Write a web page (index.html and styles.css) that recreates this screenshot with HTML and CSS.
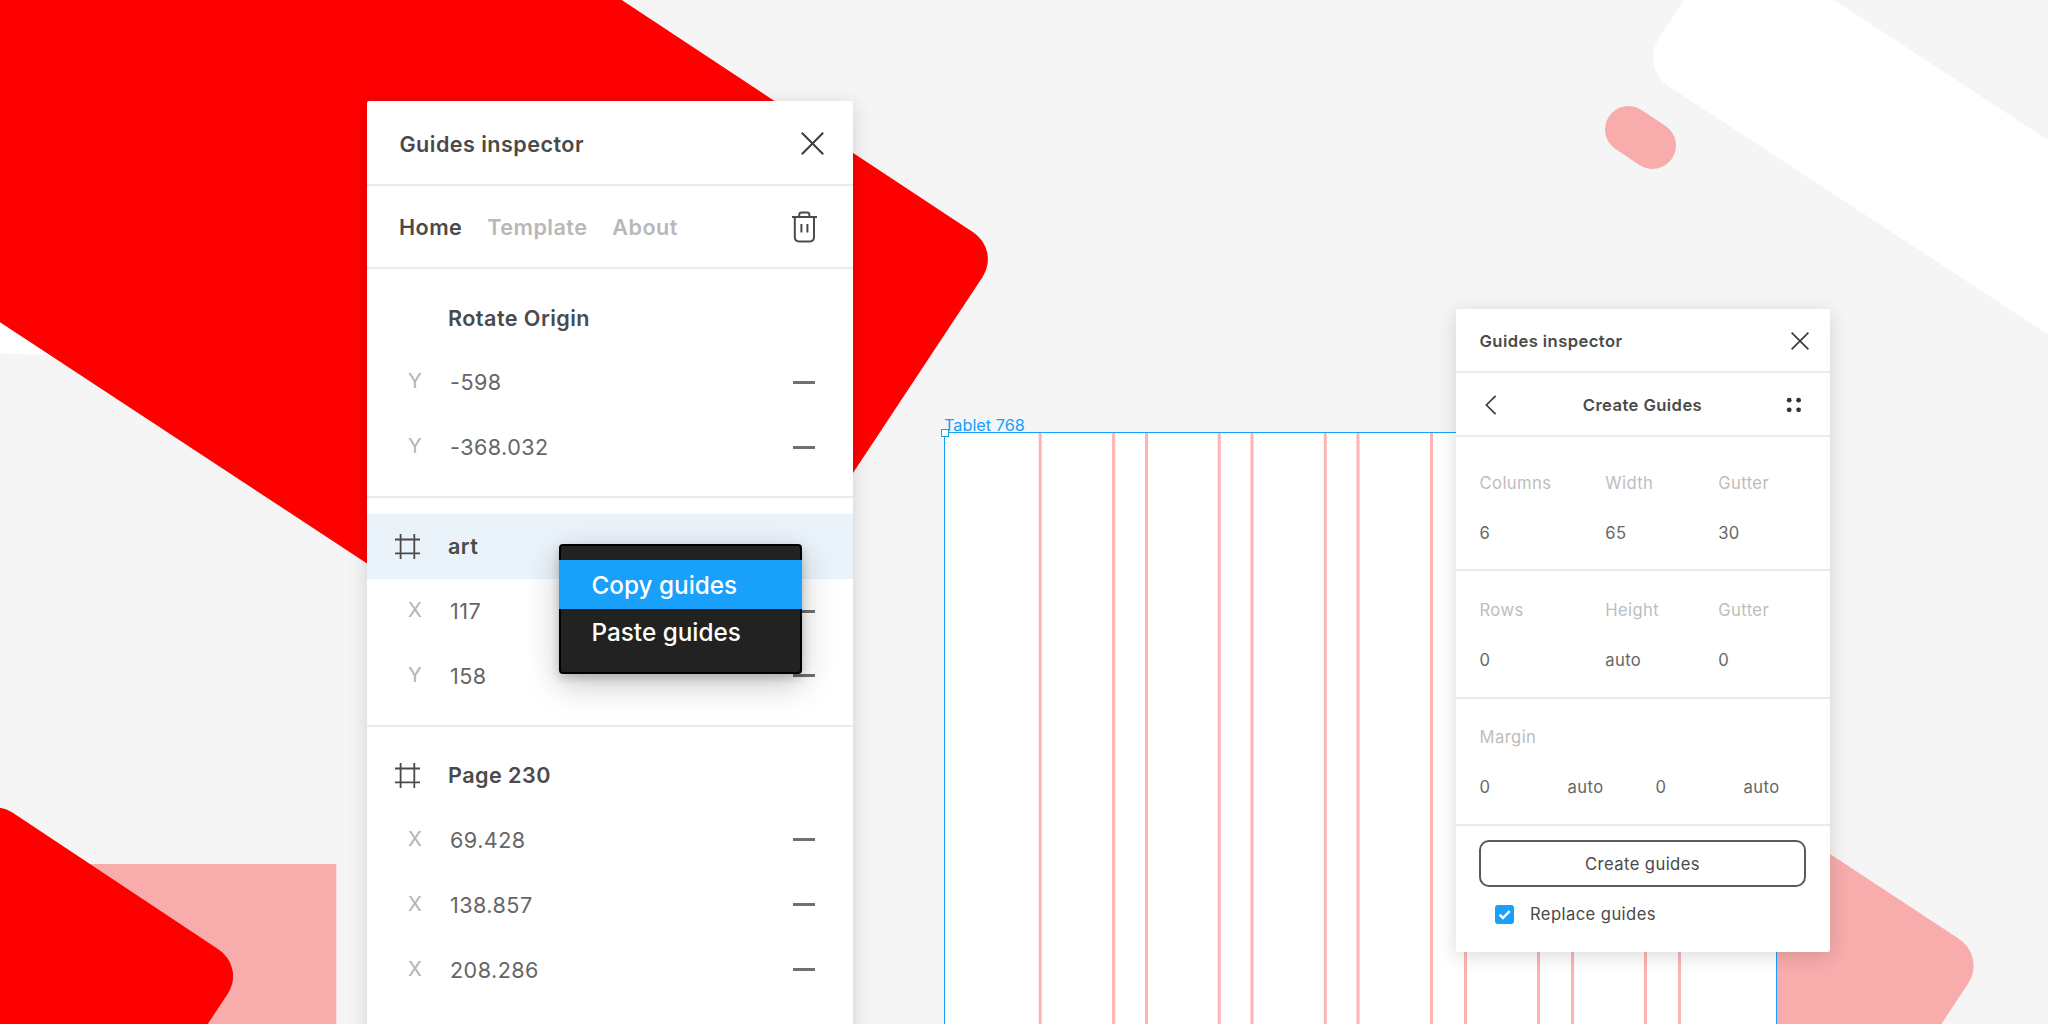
FILE: index.html
```
<!DOCTYPE html>
<html lang="en">
<head>
  <meta charset="UTF-8" />
  <meta name="viewport" content="width=device-width, initial-scale=1.0" />
  <title>Guides inspector</title>
  <link rel="stylesheet" href="styles.css">
</head>
<body>
  <svg class="backdrop" width="2048" height="1024" viewBox="0 0 2048 1024">
    <path fill="#fff" d="M0 300V353.6L60 355.6V300Z" />
    <path fill="#f00" d="M0 0H621.7L973.5 232.6A32 32 0 0 1 982.6 276.9L700 704.4L367 563.4L0 322.3Z" />
    <path fill="#f5f5f5" d="M367 563.6H853V1024H367Z" />
    <path fill="#f8acac" d="M0 864H336.3V1024H0Z" />
    <path fill="#f00" d="M0 807.7Q6 808.4 12 812.3L218.7 949.4A32 32 0 0 1 227.8 993.7L207.7 1024H0Z" />
    <path fill="#fff" d="M1684.3 0L1658.5 39A34 34 0 0 0 1668.2 86L2048 334.3V140.3L1834 0Z" />
    <path stroke="#f8acac" stroke-width="47" stroke-linecap="round" d="M1628.5 129.5L1652.5 145.5" />
    <path fill="#f8acac" d="M1776 818.5L1959.2 939A32 32 0 0 1 1968.3 983.3L1941.4 1024H1776Z" />
  </svg>

  <!-- selected frame with its column guides -->
  <div class="frame">
    <svg class="guides" width="831" height="592" viewBox="0 0 831 592">
      <path d="M95.2 0V592M168.6 0V592M201.5 0V592M274.2 0V592M307 0V592M380.3 0V592M413 0V592M486.5 0V592M520.5 0V592M593.5 0V592M627.5 0V592M700.5 0V592M734.5 0V592" />
    </svg>
    <span class="handle"></span>
    <span class="frame-name">Tablet 768</span>
  </div>

  <div class="panel panel-home">
    <div class="bar">
      <span class="title">Guides inspector</span>
      <svg class="close" width="23" height="23" viewBox="0 0 23 23"><path d="M0.8 0.8L22.2 22.2M22.2 0.8L0.8 22.2" /></svg>
    </div>
    <div class="bar tabs">
      <span class="tab active">Home</span>
      <span class="tab">Template</span>
      <span class="tab">About</span>
      <svg class="trash" width="25" height="32" viewBox="0 0 25 32">
        <path d="M0 6H25M7.2 6V4Q7.2 1.6 9.6 1.6H15Q17.4 1.6 17.4 4V6M2.8 6V26Q2.8 30.4 7 30.4H17.8Q22 30.4 22 26V6M9.4 13V21.5M15.4 13V21.5" />
      </svg>
    </div>

    <div class="group">
      <div class="row name">Rotate Origin</div>
      <div class="row"><span class="axis">Y</span><span class="value">-598</span><i class="minus"></i></div>
      <div class="row"><span class="axis">Y</span><span class="value">-368.032</span><i class="minus"></i></div>
    </div>

    <div class="group">
      <div class="row name selected">
        <svg class="hash" width="25" height="25" viewBox="0 0 25 25"><path d="M5.6 0V25M19.3 0V25M0 5.5H25M0 19.3H25" /></svg>
        art
      </div>
      <div class="row"><span class="axis">X</span><span class="value">117</span><i class="minus"></i></div>
      <div class="row"><span class="axis">Y</span><span class="value">158</span><i class="minus"></i></div>
    </div>

    <div class="group">
      <div class="row name">
        <svg class="hash" width="25" height="25" viewBox="0 0 25 25"><path d="M5.6 0V25M19.3 0V25M0 5.5H25M0 19.3H25" /></svg>
        Page 230
      </div>
      <div class="row"><span class="axis">X</span><span class="value">69.428</span><i class="minus"></i></div>
      <div class="row"><span class="axis">X</span><span class="value">138.857</span><i class="minus"></i></div>
      <div class="row"><span class="axis">X</span><span class="value">208.286</span><i class="minus"></i></div>
    </div>

    <div class="menu">
      <div class="item hover">Copy guides</div>
      <div class="item">Paste guides</div>
    </div>
  </div>

  <div class="panel panel-create">
    <div class="bar">
      <span class="title">Guides inspector</span>
      <svg class="close" width="18" height="18" viewBox="0 0 18 18"><path d="M0.6 0.6L17.4 17.4M17.4 0.6L0.6 17.4" /></svg>
    </div>
    <div class="bar nav">
      <svg class="back" width="12" height="20" viewBox="0 0 12 20"><path d="M10.6 0.8L1.4 10L10.6 19.2" /></svg>
      <span class="title">Create Guides</span>
      <svg class="dots" width="16" height="16" viewBox="0 0 16 16">
        <circle cx="3.2" cy="3.2" r="2.4" /><circle cx="12.6" cy="3.2" r="2.4" />
        <circle cx="3.2" cy="12.8" r="2.4" /><circle cx="12.6" cy="12.8" r="2.4" />
      </svg>
    </div>

    <div class="fields first">
      <label>Columns</label><label>Width</label><label>Gutter</label>
      <span>6</span><span>65</span><span>30</span>
    </div>
    <div class="fields">
      <label>Rows</label><label>Height</label><label>Gutter</label>
      <span>0</span><span>auto</span><span>0</span>
    </div>
    <div class="fields margin">
      <label>Margin</label>
      <span>0</span><span>auto</span><span>0</span><span>auto</span>
    </div>

    <div class="actions">
      <button>Create guides</button>
      <div class="replace">
        <span class="checkbox">
          <svg width="19" height="19" viewBox="0 0 19 19"><path d="M4.6 9.6L8 13L14.6 6.2" /></svg>
        </span>
        Replace guides
      </div>
    </div>
  </div>
</body>
</html>
```

FILE: styles.css
```
* { box-sizing: border-box; }
body { margin: 0; width: 2048px; height: 1024px; position: relative; overflow: hidden; background: #f5f5f5; font-family: Inter, "Liberation Sans", sans-serif; color: #4a4a4a; }
svg { display: block; fill: none; flex: none; }
.backdrop { position: absolute; left: 0; top: 0; }

.frame { position: absolute; left: 944px; top: 432px; width: 833px; height: 600px; background: #fff; border: 1px solid #18a0fb; }
.guides { stroke: #ffb3b3; stroke-width: 3; }
.handle { position: absolute; left: -4px; top: -4px; width: 8px; height: 8px; background: #fff; border: 1px solid #18a0fb; }
.frame-name { position: absolute; left: -1px; top: -18px; font-size: 16.3px; line-height: 20px; color: #18a0fb; white-space: nowrap; }

.panel { position: absolute; background: #fff; border-radius: 2px; box-shadow: 0 4px 20px rgba(0,0,0,0.15); }
.bar { display: flex; align-items: center; border-bottom: 2px solid #ebebeb; }
.title { font-weight: 600; }
.close { margin-left: auto; stroke: #3c3c3c; }

/* home panel */
.panel-home { left: 367px; top: 101px; width: 486px; height: 960px; font-size: 21.6px; letter-spacing: 0.45px; }
.panel-home .bar { height: 85px; padding: 2px 29px 0 32.5px; }
.panel-home .close { stroke-width: 2; }
.panel-home .tabs { height: 83px; padding: 0 36px 0 32px; gap: 25px; }
.tab { font-weight: 600; color: #b8b8b8; padding-top: 1px; }
.tab.active { color: #4a4a4a; }
.trash { margin-left: auto; stroke: #4a4a4a; stroke-width: 2; }
.group { padding: 16.2px 0; border-bottom: 2px solid #ebebeb; }
.group:nth-last-child(2) { border-bottom: none; }
.row { display: flex; align-items: center; height: 64.8px; padding: 0 38px 0 41px; color: #666; }
.name { padding-left: 81px; font-weight: 600; color: #4a4a4a; }
.selected { background: #ebf3fa; }
.hash { margin: 0 28px 0 -53px; stroke: #4a4a4a; stroke-width: 1.8; }
.axis { width: 42px; font-size: 20.3px; color: #b3b3b3; padding-bottom: 3px; }
.minus { width: 22.5px; height: 3px; margin-left: auto; background: #707070; }

.menu { position: absolute; left: 192px; top: 443px; width: 243px; height: 130px; padding: 14px 0; background: #222; border: 2px solid #000; border-radius: 4px; box-shadow: 0 10px 34px rgba(0,0,0,0.22), 0 4px 10px rgba(0,0,0,0.2); color: #fff; font-size: 24.3px; font-weight: 500; letter-spacing: 0; }
.item { height: 48.6px; line-height: 47px; padding-left: 32.5px; margin: 0 -2px; }
.hover { line-height: 50px; background: #18a0fb; }

/* create panel */
.panel-create { left: 1456px; top: 309px; width: 374px; height: 643px; font-size: 16.6px; letter-spacing: 0.42px; }
.panel-create .bar { height: 64px; padding: 1px 21px 0 23.5px; }
.panel-create .close, .back { stroke: #3c3c3c; stroke-width: 1.7; }
.panel-create .nav { justify-content: space-between; padding: 1px 28px 0 29px; }
.nav .title { padding-left: 2px; }
.dots { fill: #333; }
.fields { display: grid; grid-template-columns: 125.7px 113px 1fr; grid-auto-rows: 50px; align-items: center; padding: 13.5px 23.5px 0; height: 127.5px; border-bottom: 2px solid #ebebeb; color: #666; }
.fields label { color: #bdbdbd; }
.first { height: 134px; padding-top: 20.5px; }
.margin { grid-template-columns: repeat(4, 88px); padding-top: 13px; }
.margin label { grid-column: 1 / -1; }
.actions { padding: 14px 23px 0; }
button { display: block; width: 327px; height: 47px; padding: 1px 0 0; background: #fff; border: 2px solid #5a5a5a; border-radius: 10px; font: inherit; letter-spacing: inherit; color: #4a4a4a; }
.replace { display: flex; align-items: center; gap: 16px; padding-left: 16px; margin-top: 17px; }
.checkbox { width: 19px; height: 19px; border-radius: 3px; background: #18a0fb; }
.checkbox svg { stroke: #fff; stroke-width: 2.4; }
```
